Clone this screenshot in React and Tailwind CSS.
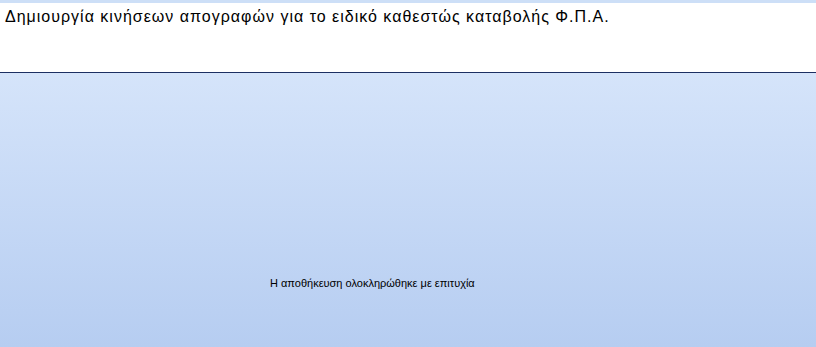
export default function App() {
  return (
    <div className="flex h-[347px] w-[816px] flex-col bg-[#cddff7] font-['Liberation_Sans',Arial,sans-serif]">
      <div className="mt-[3px] h-[70px] border-b border-[#1c2f63] bg-white px-[5px] pt-[4px]">
        <h1 className="text-[16px] leading-[19px] tracking-[1px] text-black">
          Δημιουργία κινήσεων απογραφών για το ειδικό καθεστώς καταβολής Φ.Π.Α.
        </h1>
      </div>
      <div className="flex-1 bg-gradient-to-b from-[#d5e4fa] to-[#b6cdf1] pl-[270px] pt-[203px]">
        <p className="text-[11px] leading-[14px] text-black">Η αποθήκευση ολοκληρώθηκε με επιτυχία</p>
      </div>
    </div>
  )
}
